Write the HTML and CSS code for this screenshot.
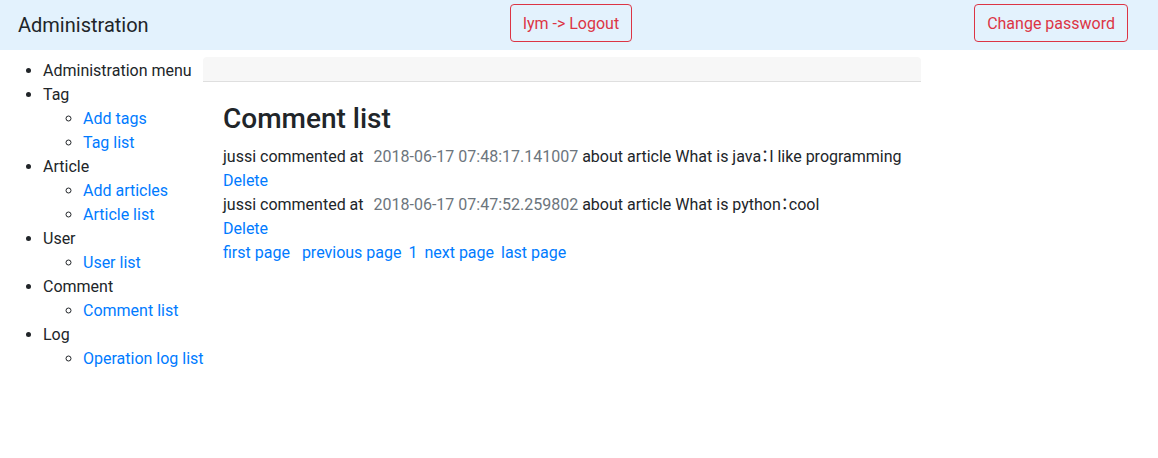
FILE: index.html
```html
<!DOCTYPE html>
<html lang="en">
<head>
<meta charset="utf-8">
<title>Administration</title>
<link rel="stylesheet" href="styles.css">
</head>
<body>
<header class="navbar">
  <div class="brand">Administration</div>
  <a class="btn-danger-outline" href="#">lym -&gt; Logout</a>
  <div class="spacer"></div>
  <a class="btn-danger-outline" href="#">Change password</a>
</header>
<div class="layout">
  <nav class="sidebar">
    <ul class="menu">
      <li>Administration menu</li>
      <li>Tag
        <ul class="submenu">
          <li><a href="#">Add tags</a></li>
          <li><a href="#">Tag list</a></li>
        </ul>
      </li>
      <li>Article
        <ul class="submenu">
          <li><a href="#">Add articles</a></li>
          <li><a href="#">Article list</a></li>
        </ul>
      </li>
      <li>User
        <ul class="submenu">
          <li><a href="#">User list</a></li>
        </ul>
      </li>
      <li>Comment
        <ul class="submenu">
          <li><a href="#">Comment list</a></li>
        </ul>
      </li>
      <li>Log
        <ul class="submenu">
          <li><a href="#">Operation log list</a></li>
        </ul>
      </li>
    </ul>
  </nav>
  <main class="card">
    <div class="card-header"></div>
    <div class="card-body">
      <h3 class="title">Comment list</h3>
      <div class="comment">
        <div class="line">jussi commented at <span class="time">2018-06-17 07:48:17.141007</span> about article What is java<span class="colon">：</span>I like programming</div>
        <div><a href="#">Delete</a></div>
      </div>
      <div class="comment">
        <div class="line">jussi commented at <span class="time">2018-06-17 07:47:52.259802</span> about article What is python<span class="colon">：</span>cool</div>
        <div><a href="#">Delete</a></div>
      </div>
      <div class="pager">
        <a class="first" href="#">first page</a>
        <a href="#">previous page</a>
        <a href="#">1</a>
        <a href="#">next page</a>
        <a href="#">last page</a>
      </div>
    </div>
  </main>
</div>
</body>
</html>
```
FILE: styles.css
```css
html, body {
  margin: 0;
  padding: 0;
}
body {
  font-family: Roboto, "Liberation Sans", "Noto Sans CJK JP", sans-serif;
  font-size: 16px;
  line-height: 24px;
  color: #212529;
  background: #fff;
}
a {
  color: #007bff;
  text-decoration: none;
}
.navbar {
  display: flex;
  align-items: flex-start;
  height: 50px;
  box-sizing: border-box;
  background: #e3f2fd;
  padding: 4px 30px 0 18px;
}
.brand {
  width: 492px;
  font-size: 20px;
  line-height: 30px;
  margin-top: 6px;
}
.spacer {
  flex: 1;
}
.btn-danger-outline {
  display: inline-block;
  color: #dc3545;
  border: 1px solid #dc3545;
  border-radius: 4px;
  padding: 7px 12px 5px;
  font-size: 16px;
  line-height: 24px;
}
.layout {
  display: flex;
  align-items: flex-start;
  padding: 7px 0 0 3px;
}
.sidebar {
  width: 200px;
  flex: none;
  margin-top: 2px;
}
.menu {
  margin: 0;
  padding-left: 40px;
  list-style: disc;
  white-space: nowrap;
}
.submenu {
  margin: 0;
  padding-left: 40px;
  list-style: circle;
}
.card {
  width: 718px;
  flex: none;
  border-radius: 4px;
}
.card-header {
  height: 24px;
  background: #f7f7f7;
  border-bottom: 1px solid #dfdfdf;
  border-radius: 4px 4px 0 0;
}
.card-body {
  padding: 20px;
}
.title {
  margin: 0 0 9px;
  font-size: 28px;
  line-height: 33.6px;
  font-weight: 500;
}
.line {
  white-space: nowrap;
  height: 24px;
}
.time {
  color: #6c757d;
  margin-left: 6px;
}
.colon {
  font-family: "Noto Sans CJK JP", sans-serif;
  line-height: 0;
  margin: 0 -4px;
}
.pager a {
  margin-right: 3px;
}
.pager a.first {
  margin-right: 8px;
}
```
